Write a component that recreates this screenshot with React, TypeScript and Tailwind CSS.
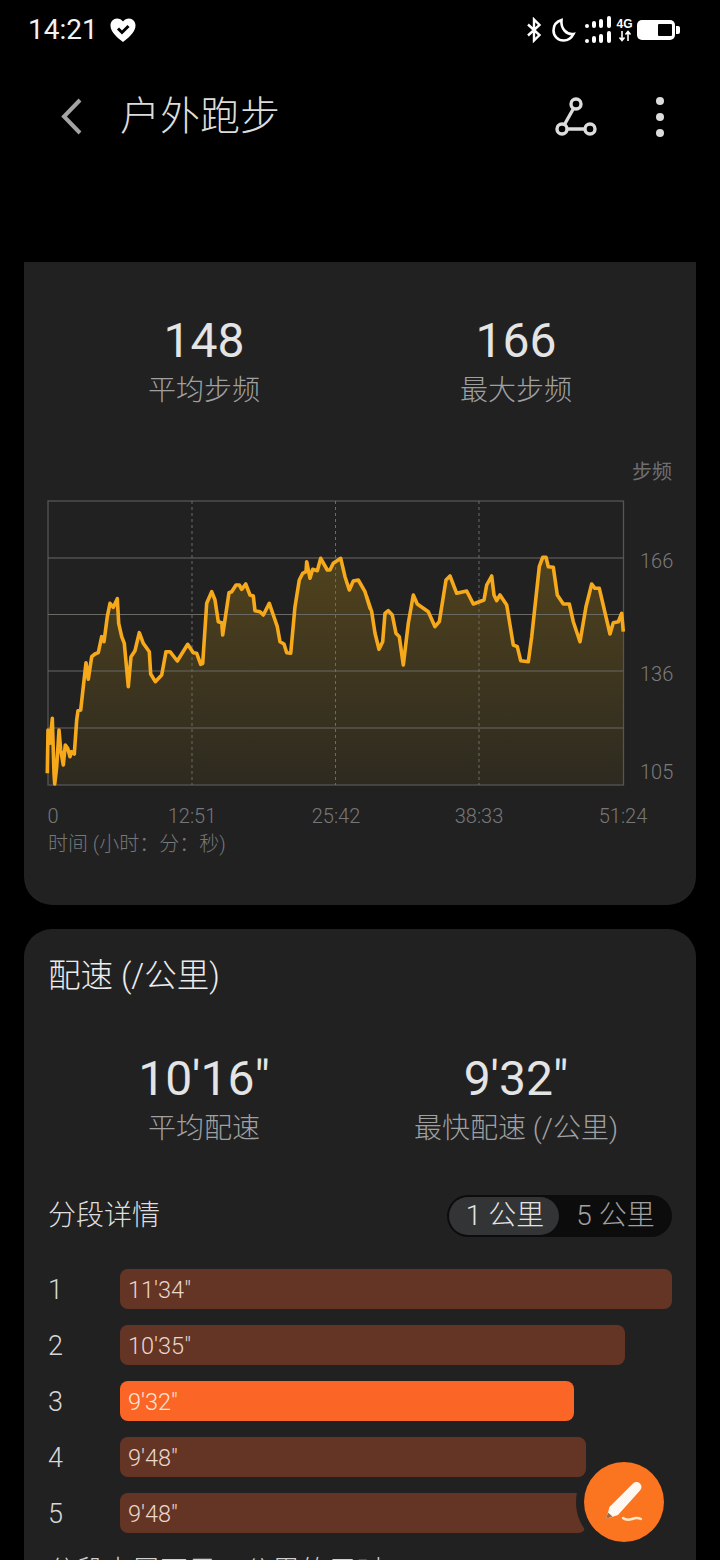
const left = [[52,880],[54,750],[60,790],[67,715],[72,880],[74,912],[80,860],[87,750],[92,810],[100,855],[106,795],[113,805],[120,830],[125,815],[133,822],[140,720],[144,692],[152,690],[160,620],[168,548],[175,598],[185,530],[195,522],[205,518],[215,470],[222,485],[232,410],[240,370],[250,382],[262,356],[266,430],[275,470],[283,490],[295,620],[303,530],[315,512],[328,458],[340,490],[358,515],[362,582],[376,605],[395,585],[408,515],[420,515],[442,543],[473,493],[490,518],[500,520],[512,553],[518,550],[530,370],[545,335],[555,360],[565,425],[575,428],[578,465],[597,338],[605,335],[618,315],[628,315],[635,328],[647,312],[660,345],[670,348],[675,392],[690,395],[700,405],[718,370],[730,405],[742,440],[750,485],[762,492],[770,518],[782,520],[795,380],[808,300],[818,280],[828,275],[830,245],[840,295],[848,268],[862,272],[872,235],[892,270],[900,270],[910,250],[932,235],[945,290],[958,330],[970,303],[985,300],[1005,335],[1020,385]];
const right = [[20,350],[35,395],[45,460],[57,508],[68,485],[75,400],[85,392],[97,405],[108,460],[118,470],[130,555],[145,430],[160,345],[172,372],[205,395],[225,440],[238,425],[258,300],[270,288],[290,340],[320,333],[340,372],[372,360],[380,315],[395,288],[402,345],[410,362],[420,345],[440,375],[460,495],[472,500],[482,542],[505,545],[515,470],[538,260],[548,232],[558,232],[565,260],[580,262],[592,345],[610,372],[628,372],[640,425],[660,485],[678,380],[695,312],[705,325],[718,325],[750,462],[760,428],[775,425],[785,400],[790,455]];

const trace = [
  ...left.map(([x, y]) => [30 + x / 3, 480 + y / 3]),
  ...right.map(([x, y]) => [360 + x / 3, 480 + y / 3]),
];
const line = trace.map(([x, y]) => `${x.toFixed(1)},${y.toFixed(1)}`).join(" ");

const splits = [
  { km: 1, pace: "11'34\"", width: 552 },
  { km: 2, pace: "10'35\"", width: 505 },
  { km: 3, pace: "9'32\"", width: 454, fastest: true },
  { km: 4, pace: "9'48\"", width: 466 },
  { km: 5, pace: "9'48\"", width: 466 },
];

// x is the centre of the label, measured from the chart wrapper
const ticks = [
  { x: 29, label: "0" },
  { x: 168, label: "12:51" },
  { x: 312, label: "25:42" },
  { x: 455, label: "38:33" },
  { x: 599, label: "51:24" },
];

function StatusIcons() {
  return (
    <div className="flex items-center text-white">
      <svg width="16" height="26" viewBox="0 0 16 26" fill="none" stroke="white" strokeWidth="2.4">
        <path d="M2 7.5 13.5 18 8 23.5V2.5L13.5 8 2 18.5" />
      </svg>
      <svg className="ml-[10px]" width="24" height="26" viewBox="0 0 24 26" fill="none" stroke="white" strokeWidth="2.6">
        <path d="M9.5 3C4.5 4.5 1.5 8.5 1.5 13.5c0 5.5 4.5 10 10 10 4.5 0 8-2.5 10-6.5-6.5 1-13-5-12-14Z" />
      </svg>
      <svg className="ml-[8px]" width="28" height="28" viewBox="0 0 28 28" fill="white">
        <rect x="1" y="8" width="4" height="4" rx="2" />
        <rect x="8" y="5" width="4" height="7" rx="2" />
        <rect x="15" y="3" width="4" height="9" rx="2" />
        <rect x="23" y="0" width="4" height="12" rx="2" />
        <rect x="1" y="23" width="4" height="4" rx="2" />
        <rect x="8" y="20" width="4" height="7" rx="2" />
        <rect x="15" y="18" width="4" height="9" rx="2" />
        <rect x="23" y="15" width="4" height="12" rx="2" />
      </svg>
      <div className="ml-[5px] flex w-[15px] flex-col items-center leading-none">
        <span className="font-['Liberation_Sans'] text-[12px] font-bold leading-[12px] text-white">4G</span>
        <svg width="14" height="12" viewBox="0 0 14 12" fill="none" stroke="white" strokeWidth="1.6">
          <path d="M4 1v9M1.5 7.5 4 10.5l2.5-3M10 11V2M7.5 4.5 10 1.5l2.5 3" />
        </svg>
      </div>
      <div className="ml-[5px] flex items-center">
        <div className="h-[20px] w-[38px] rounded-[5px] bg-white p-[4px] pl-[21px] pr-[3px]">
          <div className="h-full w-full rounded-[1px] bg-black" />
        </div>
        <div className="ml-[1px] h-[8px] w-[4px] rounded-r-[2px] bg-white" />
      </div>
    </div>
  );
}

function Stat({ value, label }: { value: string; label: string }) {
  return (
    <div className="flex flex-col items-center">
      <span className="text-[48px] font-normal leading-[54px] text-[#e4e4e4]">{value}</span>
      <span className="mt-[5px] text-[28px] font-light leading-[36px] text-[#a0a0a0]">{label}</span>
    </div>
  );
}

function CadenceChart() {
  return (
    <div className="relative mt-[51px] h-[400px] w-[672px]">
      <svg width="672" height="400" viewBox="24 460 672 400" className="block">
        <defs>
          <linearGradient id="area" x1="0" y1="0" x2="0" y2="1">
            <stop offset="0" stopColor="#50421d" />
            <stop offset="1" stopColor="#2d2a20" />
          </linearGradient>
        </defs>
        <polygon points={`48,785 ${line} 623.5,785`} fill="url(#area)" />
        <rect x="48" y="501" width="575.5" height="284" fill="none" stroke="#555555" strokeWidth="1.3" />
        {[558, 614.5, 671, 728].map((y) => (
          <line key={y} x1="48" x2="623.5" y1={y} y2={y} stroke="#6a6963" strokeWidth="1.2" />
        ))}
        {[192, 335.5, 479].map((x) => (
          <line key={x} x1={x} x2={x} y1="501" y2="785" stroke="#6c6b66" strokeWidth="1" strokeDasharray="3 3" />
        ))}
        <polyline points={line} fill="none" stroke="#f7a91c" strokeWidth="3.6" strokeLinejoin="round" />
      </svg>
      <span className="absolute right-[24px] top-[-3px] text-[20px] text-[#6f6f6f]">步频</span>
      <span className="absolute left-[616px] top-[86px] text-[20px] font-light text-[#7b7b7b]">166</span>
      <span className="absolute left-[616px] top-[199px] text-[20px] font-light text-[#7b7b7b]">136</span>
      <span className="absolute left-[616px] top-[297px] text-[20px] font-light text-[#7b7b7b]">105</span>
      {ticks.map((t) => (
        <span
          key={t.label}
          className="absolute top-[341px] -translate-x-1/2 text-[20px] font-light text-[#777777]"
          style={{ left: t.x }}
        >
          {t.label}
        </span>
      ))}
      <span className="absolute left-[24px] top-[369px] text-[20px] font-light text-[#777777]">时间 (小时：分：秒)</span>
    </div>
  );
}

export default function App() {
  return (
    <div className="relative h-[1560px] w-[720px] overflow-hidden bg-black font-['Roboto','Noto_Sans_CJK_SC',sans-serif]">
      <div className="flex h-[60px] items-center justify-between pl-[28px] pr-[40px]">
        <div className="flex items-center gap-[11px]">
          <span className="text-[28px] leading-none text-[#f2f2f2]">14:21</span>
          <svg width="28" height="26" viewBox="0 0 28 26">
            <path d="M14 25C6 19 1.5 14 1.5 8.5 1.5 4.5 4.5 1.5 8 1.5c2.5 0 4.5 1 6 3 1.5-2 3.5-3 6-3 3.5 0 6.500 3 6.500 7 0 5.500-4.500 10.500-12.500 16.500Z" fill="white" />
            <path d="M9 11.5 13 15.5 19.5 9" fill="none" stroke="black" strokeWidth="3" />
          </svg>
        </div>
        <StatusIcons />
      </div>

      <div className="flex h-[114px] items-center pl-[60px] pr-[50px]">
        <svg width="24" height="40" viewBox="0 0 24 40" fill="none" stroke="#a3a3a3" strokeWidth="4">
          <path d="M20 3 4 19.5 20 36" />
        </svg>
        <span className="ml-[36px] text-[40px] font-light leading-none text-[#dcdcdc]">户外跑步</span>
        <div className="ml-auto flex items-center gap-[52px]">
          <svg width="44" height="40" viewBox="0 0 44 40" fill="none" stroke="#dcdcdc" strokeWidth="3.4">
            <circle cx="22" cy="7" r="5" />
            <circle cx="8" cy="32" r="5" />
            <circle cx="36" cy="32" r="5" />
            <path d="M19.5 11.5 10.5 27.5M13 32h18" />
          </svg>
          <svg width="20" height="44" viewBox="0 0 20 44" fill="#dcdcdc">
            <circle cx="10" cy="6" r="4" />
            <circle cx="10" cy="22" r="4" />
            <circle cx="10" cy="38" r="4" />
          </svg>
        </div>
      </div>

      <div className="mx-[24px] mt-[88px] rounded-b-[28px] bg-[#212122] pb-[45px]">
        <div className="grid grid-cols-2 px-[24px] pt-[52px]">
          <Stat value="148" label="平均步频" />
          <Stat value="166" label="最大步频" />
        </div>
        <CadenceChart />
      </div>

      <div className="mx-[24px] mt-[24px] h-[700px] rounded-t-[28px] bg-[#212122] px-[24px]">
        <div className="pt-[26px] text-[32.5px] font-light leading-[42px] text-[#ececec]">配速 (/公里)</div>
        <div className="mt-[55px] grid grid-cols-2">
          <Stat value={"10'16\""} label="平均配速" />
          <Stat value={"9'32\""} label="最快配速 (/公里)" />
        </div>
        <div className="mt-[48px] flex items-center justify-between">
          <span className="text-[28px] font-light leading-[40px] text-[#dedede]">分段详情</span>
          <div className="flex h-[42px] items-center rounded-full bg-[#0c0c0c] p-[2px] text-[28px] font-light">
            <span className="flex h-[38px] w-[110px] items-center justify-center rounded-full bg-[#333436] pl-[2px] text-[#e4e4e4]">1 公里</span>
            <span className="w-[111px] pl-[2px] text-center text-[#a0a0a0]">5 公里</span>
          </div>
        </div>
        <div className="mt-[32px] flex flex-col gap-[16px]">
          {splits.map((s) => (
            <div key={s.km} className="flex h-[40px] items-center">
              <span className="w-[72px] pt-[3px] text-[27px] font-light text-[#d6d6d6]">{s.km}</span>
              <div
                className={
                  s.fastest
                    ? "flex h-[40px] items-center rounded-[8px] bg-[#fb6526] pl-[8px] pt-[3px] text-[23.5px] font-light text-[#ffe5d8]"
                    : "flex h-[40px] items-center rounded-[8px] bg-[#643525] pl-[8px] pt-[3px] text-[23.5px] font-light text-[#ecd6cc]"
                }
                style={{ width: s.width }}
              >
                {s.pace}
              </div>
            </div>
          ))}
        </div>
        <div className="mt-[19px] text-[28px] font-light leading-[40px] text-[#d0d0d0]">分段末尾不足一公里的用时</div>
      </div>

      <div className="absolute left-[584px] top-[1462px] flex h-[80px] w-[80px] items-center justify-center rounded-full bg-[#fb741f] ring-[8px] ring-[#212122]">
        <svg width="44" height="44" viewBox="0 0 44 44" fill="none">
          <path d="M4 39 7.5 27 31 3.5c2-2 5-2 7 0s2 5 0 7L16 35Z" fill="#fff8f0" />
          <path d="M4 39 6 32.5 10.5 36.5Z" fill="#a8693c" />
          <path d="M21 38c3 2.5 6 2 9 1s5-2 9 0" stroke="#ffe6c4" strokeWidth="2.4" strokeLinecap="round" />
        </svg>
      </div>
    </div>
  );
}
